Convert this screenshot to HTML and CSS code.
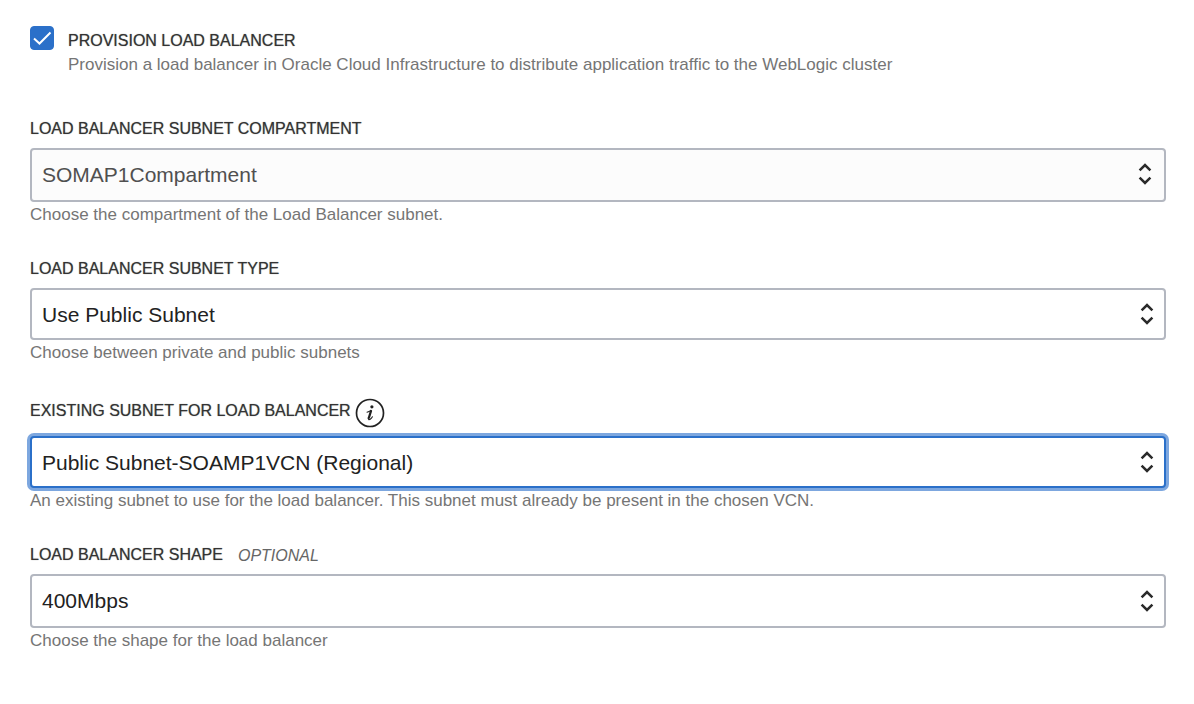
FILE: index.html
```html
<!DOCTYPE html>
<html lang="en">
<head>
<meta charset="utf-8">
<meta name="viewport" content="width=device-width, initial-scale=1">
<title>Load Balancer</title>
<link rel="stylesheet" href="styles.css">
</head>
<body>
<svg class="sprite" aria-hidden="true">
  <symbol id="arrows" viewBox="0 0 14 24"><path d="M1.6 8.4 L7 3 L12.4 8.4 M1.6 15.6 L7 21 L12.4 15.6"/></symbol>
</svg>
<form class="form">
  <div class="check-row">
    <input class="checkbox" type="checkbox" id="provision" aria-describedby="provision-help" checked>
    <svg class="tick" viewBox="0 0 24 24" aria-hidden="true"><path d="M4 12.5 L9.5 17.5 L20.5 6.5"/></svg>
    <div class="check-text">
      <label class="label" for="provision">PROVISION LOAD BALANCER</label>
      <p class="help" id="provision-help">Provision a load balancer in Oracle Cloud Infrastructure to distribute application traffic to the WebLogic cluster</p>
    </div>
  </div>

  <div class="field">
    <div class="field-head"><label class="label" for="compartment">LOAD BALANCER SUBNET COMPARTMENT</label></div>
    <div class="select-box">
      <select class="select select-muted select-tall" id="compartment"><option>SOMAP1Compartment</option></select>
      <svg class="arrows arrows-inset" aria-hidden="true"><use href="#arrows"/></svg>
    </div>
    <p class="help">Choose the compartment of the Load Balancer subnet.</p>
  </div>

  <div class="field">
    <div class="field-head"><label class="label" for="type">LOAD BALANCER SUBNET TYPE</label></div>
    <div class="select-box">
      <select class="select" id="type"><option>Use Public Subnet</option></select>
      <svg class="arrows" aria-hidden="true"><use href="#arrows"/></svg>
    </div>
    <p class="help">Choose between private and public subnets</p>
  </div>

  <div class="field">
    <div class="field-head field-head-info">
      <label class="label" for="subnet">EXISTING SUBNET FOR LOAD BALANCER</label>
      <button class="info" type="button" aria-label="More information">
        <svg class="info-icon" viewBox="0 0 30 30" aria-hidden="true">
          <circle class="info-ring" cx="15" cy="15" r="13.5"/>
          <circle cx="16.9" cy="8.8" r="1.6"/>
          <path class="info-stem" d="M16 13 L13.8 20"/>
          <path class="info-tail" d="M12 14.2 Q14 13.6 16 12.6 M13.3 19.8 Q13.2 22.4 15.2 21.2 Q16.6 20.2 17.4 18.8"/>
        </svg>
      </button>
    </div>
    <div class="select-box">
      <select class="select select-active" id="subnet"><option>Public Subnet-SOAMP1VCN (Regional)</option></select>
      <svg class="arrows" aria-hidden="true"><use href="#arrows"/></svg>
    </div>
    <p class="help">An existing subnet to use for the load balancer. This subnet must already be present in the chosen VCN.</p>
  </div>

  <div class="field">
    <div class="field-head">
      <label class="label" for="shape">LOAD BALANCER SHAPE</label>
      <span class="optional">OPTIONAL</span>
    </div>
    <div class="select-box">
      <select class="select select-tall" id="shape"><option>400Mbps</option></select>
      <svg class="arrows" aria-hidden="true"><use href="#arrows"/></svg>
    </div>
    <p class="help">Choose the shape for the load balancer</p>
  </div>
</form>
</body>
</html>
```
FILE: styles.css
```css
* { box-sizing: border-box; }

body {
  margin: 0;
  background: #fff;
  color: #333;
  font-family: "Liberation Sans", Arial, sans-serif;
  font-size: 16px;
  line-height: 24px;
}

.sprite { display: none; }

.form {
  display: flex;
  flex-direction: column;
  gap: 29px;
  padding: 26px 28px 24px 30px;
}

.check-row {
  display: grid;
  grid-template-columns: 24px 1fr;
  column-gap: 14px;
  align-items: start;
  margin-bottom: 10px;
}

.checkbox {
  grid-area: 1 / 1;
  appearance: none;
  width: 24px;
  height: 24px;
  margin: 0;
  border-radius: 4px;
  border: 1px solid #2b70c9;
}
.checkbox:checked { background: #2b70c9; }

.tick {
  grid-area: 1 / 1;
  width: 24px;
  height: 24px;
  fill: none;
  stroke: #fff;
  stroke-width: 2;
  pointer-events: none;
}

.check-text {
  grid-area: 1 / 2;
  padding-top: 3px;
}

.label {
  display: block;
  text-shadow: 0 0 1px #888;
}

.help {
  margin: 0;
  color: #757575;
  font-size: 17px;
}
.field .help { padding-top: 1px; }

.field-head {
  display: flex;
  align-items: center;
  gap: 15px;
  padding-top: 1px;
  margin-bottom: 7px;
}
.field-head-info {
  gap: 4px;
  min-height: 34px;
  padding-top: 0;
  margin-bottom: 8px;
}

.info {
  display: flex;
  margin: 3px 0 0;
  padding: 0;
  border: 0;
  background: none;
}
.info-icon {
  width: 30px;
  height: 30px;
  fill: #222;
  stroke: none;
}
.info-ring, .info-stem, .info-tail {
  fill: none;
  stroke: #222;
  stroke-linecap: round;
}
.info-ring { stroke-width: 1.7; }
.info-stem { stroke-width: 2.3; }
.info-tail { stroke-width: 1.1; }

.optional {
  padding-top: 2px;
  color: #666;
  font-style: italic;
  line-height: 22px;
}

.select-box {
  display: grid;
  align-items: center;
}

.select {
  grid-area: 1 / 1;
  appearance: none;
  width: 100%;
  height: 52px;
  margin: 0;
  padding: 0 44px 0 10px;
  border: 2px solid #b3b7c0;
  border-radius: 4px;
  outline: 0;
  background: #fff;
  color: #222;
  font-family: inherit;
  font-size: 21px;
}
.select-tall {
  height: 54px;
  padding-bottom: 2px;
}
.select-muted {
  background: #fcfcfc;
  color: #505050;
}
.select-active {
  border-color: #2b70c9;
  box-shadow: 0 0 0 3px #7da7df;
}

.arrows {
  grid-area: 1 / 1;
  justify-self: end;
  width: 14px;
  height: 24px;
  margin-right: 12px;
  fill: none;
  stroke: #2a2a2a;
  stroke-width: 2.5;
  pointer-events: none;
}
.arrows-inset { margin: 0 14px 2px 0; }
```
